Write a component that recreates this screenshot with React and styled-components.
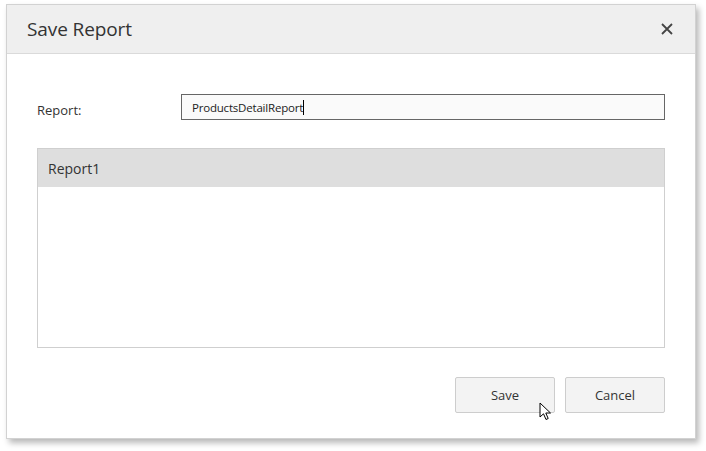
import React from "react";
import styled, { createGlobalStyle } from "styled-components";

const Global = createGlobalStyle`
  html, body { margin: 0; padding: 0; background: #fff; }
  body { font-family: "Open Sans", "Noto Sans", sans-serif; color: #333; }
`;

const Page = styled.div`
  width: 706px;
  height: 451px;
  padding: 4px 0 0 6px;
  box-sizing: border-box;
`;

const Dialog = styled.div`
  position: relative;
  width: 690px;
  height: 435px;
  box-sizing: border-box;
  border: 1px solid #d2d2d2;
  background: #fff;
  box-shadow: 3px 4px 6px rgba(0, 0, 0, 0.28);
  display: flex;
  flex-direction: column;
`;

const Header = styled.div`
  height: 48px;
  flex: none;
  background: #efefef;
  border-bottom: 1px solid #dadada;
  display: flex;
  align-items: center;
  justify-content: space-between;
  padding: 0 20px 0 20px;
`;

const Title = styled.div`
  font-size: 19px;
  color: #333;
  letter-spacing: -0.1px;
`;

const Close = styled.button`
  border: 0;
  background: none;
  padding: 0;
  width: 16px;
  height: 16px;
  display: flex;
  align-items: center;
  justify-content: center;
  cursor: pointer;
`;

const Body = styled.div`
  flex: 1;
  padding: 40px 30px 0 30px;
  display: flex;
  flex-direction: column;
`;

const FormRow = styled.div`
  display: flex;
  align-items: center;
  height: 26px;
`;

const Label = styled.label`
  width: 144px;
  font-size: 13px;
  color: #333;
  padding-top: 5px;
`;

const Input = styled.div`
  flex: 1;
  height: 26px;
  box-sizing: border-box;
  border: 1px solid #666;
  background: #fafafa;
  font-size: 11.5px;
  color: #222;
  display: flex;
  align-items: center;
  padding-left: 10px;
  letter-spacing: -0.2px;
`;

const Caret = styled.span`
  display: inline-block;
  width: 1px;
  height: 15px;
  background: #000;
`;

const List = styled.div`
  margin-top: 28px;
  height: 200px;
  box-sizing: border-box;
  border: 1px solid #cfcfcf;
  background: #fff;
`;

const Item = styled.div`
  height: 38px;
  display: flex;
  align-items: center;
  padding-left: 10px;
  font-size: 14px;
  color: #333;
  background: ${(p) => (p.$selected ? "#dedede" : "transparent")};
`;

const Footer = styled.div`
  margin-top: 29px;
  display: flex;
  justify-content: flex-end;
  gap: 10px;
`;

const Button = styled.button`
  position: relative;
  width: 100px;
  height: 36px;
  box-sizing: border-box;
  border: 1px solid #cdcdcd;
  border-radius: 2px;
  background: #f3f3f3;
  font-family: inherit;
  font-size: 13px;
  color: #333;
  padding: 0;
`;

const Cursor = styled.svg`
  position: absolute;
  left: 83px;
  top: 24px;
  pointer-events: none;
`;

export default function App() {
  return (
    <Page>
      <Global />
      <Dialog>
        <Header>
          <Title>Save Report</Title>
          <Close aria-label="Close">
            <svg width="12" height="12" viewBox="0 0 12 12">
              <path d="M1 1 L11 11 M11 1 L1 11" stroke="#444" strokeWidth="1.8" />
            </svg>
          </Close>
        </Header>
        <Body>
          <FormRow>
            <Label>Report:</Label>
            <Input>
              ProductsDetailReport
              <Caret />
            </Input>
          </FormRow>
          <List>
            <Item $selected>Report1</Item>
          </List>
          <Footer>
            <Button>
              Save
              <Cursor width="14" height="20" viewBox="0 0 14 20">
                <path
                  d="M1 1 L1 15 L4.5 11.8 L7 17.5 L9.2 16.5 L6.8 11 L11.5 11 Z"
                  fill="#fff"
                  stroke="#000"
                  strokeWidth="1"
                  strokeLinejoin="round"
                />
              </Cursor>
            </Button>
            <Button>Cancel</Button>
          </Footer>
        </Body>
      </Dialog>
    </Page>
  );
}
